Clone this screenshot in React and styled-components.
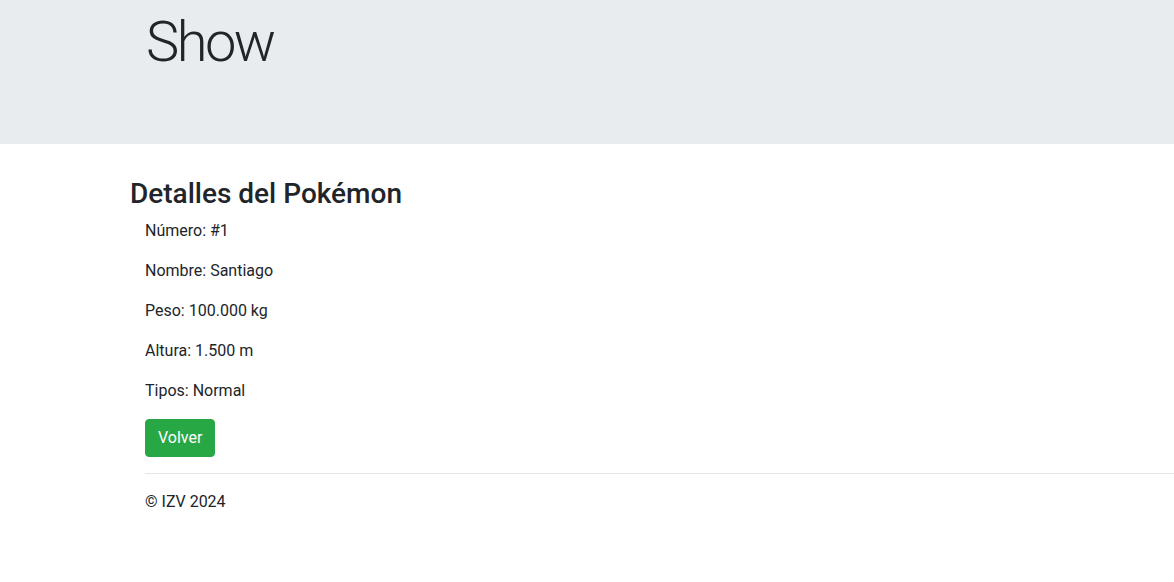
import * as React from 'react';
import styled, { createGlobalStyle } from 'styled-components';

const GlobalStyle = createGlobalStyle`
  body {
    margin: 0;
    font-family: Roboto, "Segoe UI", "Noto Sans", Arial, sans-serif;
    font-size: 16px;
    line-height: 1.5;
    color: #212529;
    background: #ffffff;
  }
`;

const Jumbotron = styled.header`
  height: 144px;
  box-sizing: border-box;
  padding: 9px 0 0 146px;
  background: #e9ecef;

  h1 {
    margin: 0;
    font-size: 56px;
    font-weight: 300;
    line-height: 1.2;
    letter-spacing: -2.5px;
    color: #212529;
  }
`;

const Main = styled.main`
  padding: 33px 0 0 130px;
`;

const Title = styled.h2`
  margin: 0 0 8px;
  font-size: 28px;
  font-weight: 500;
  line-height: 1.2;
`;

const Details = styled.section`
  padding-left: 15px;
`;

const Field = styled.p`
  margin: 0 0 16px;
`;

const Button = styled.a`
  display: inline-block;
  padding: 6px 12px;
  font-size: 16px;
  line-height: 24px;
  color: #ffffff;
  background: #28a745;
  border: 1px solid #28a745;
  border-radius: 4px;
  text-decoration: none;
  cursor: pointer;
`;

const Divider = styled.hr`
  margin: 16px 0;
  border: 0;
  border-top: 1px solid rgba(0, 0, 0, 0.1);
`;

const Footer = styled.footer`
  p {
    margin: 0;
  }
`;

const fields = [
  ['Número', '#1'],
  ['Nombre', 'Santiago'],
  ['Peso', '100.000 kg'],
  ['Altura', '1.500 m'],
  ['Tipos', 'Normal'],
];

const App = () => {
  return (
    <>
      <GlobalStyle />
      <Jumbotron>
        <h1>Show</h1>
      </Jumbotron>
      <Main>
        <Title>Detalles del Pokémon</Title>
        <Details>
          {fields.map(([label, value]) => (
            <Field key={label}>
              {label}: {value}
            </Field>
          ))}
          <Button href="#">Volver</Button>
          <Divider />
          <Footer>
            <p>© IZV 2024</p>
          </Footer>
        </Details>
      </Main>
    </>
  );
};

export default App;
